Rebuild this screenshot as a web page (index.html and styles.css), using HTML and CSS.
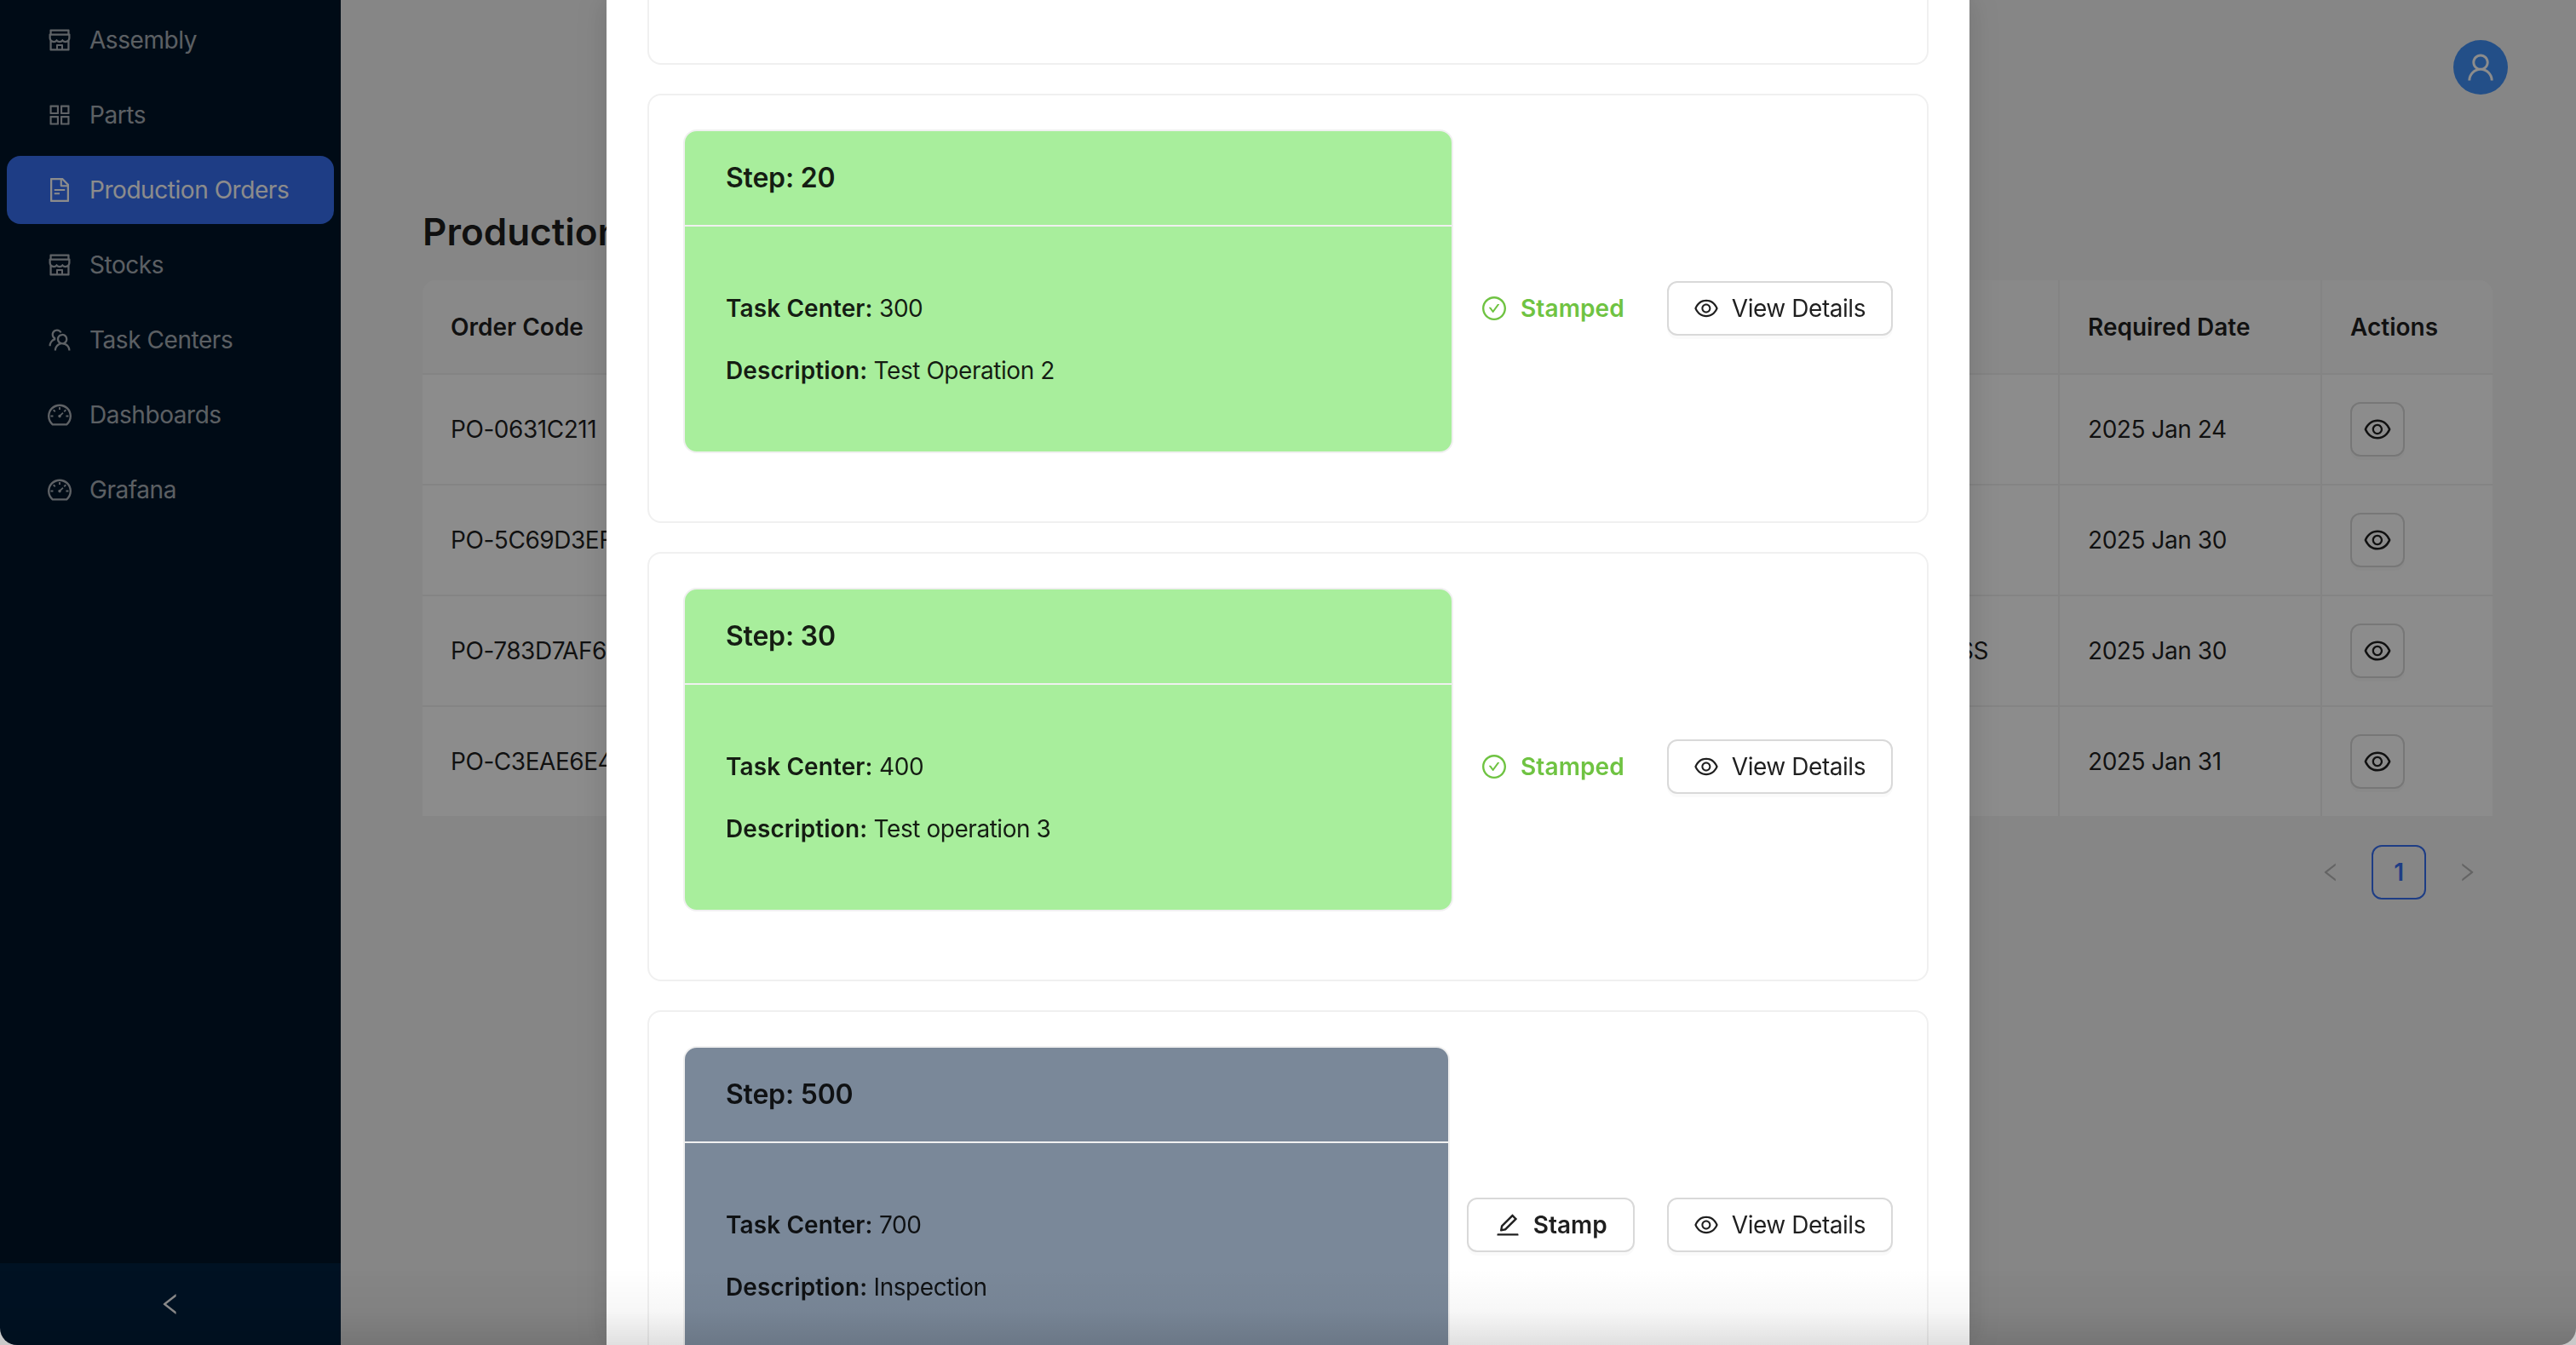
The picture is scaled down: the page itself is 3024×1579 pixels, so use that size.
FILE: index.html
```html
<!DOCTYPE html>
<html lang="en">

<head>
    <meta charset="UTF-8">
    <title>Production Orders</title>
    <link rel="stylesheet" href="styles.css">
</head>

<body>
    <!-- Icon sprite -->
    <svg class="sprite" xmlns="http://www.w3.org/2000/svg">
        <symbol id="i-shop" viewBox="0 0 1024 1024"><path d="M882 272.1V144c0-17.7-14.3-32-32-32H174c-17.7 0-32 14.3-32 32v128.1c-16.7 1-30 14.9-30 31.9v131.7a177 177 0 0014.4 70.4c4.3 10.2 9.6 19.8 15.6 28.9v345c0 17.6 14.3 32 32 32h676c17.7 0 32-14.3 32-32V535a175 175 0 0015.6-28.9c9.5-22.3 14.4-46 14.4-70.4V304c0-17-13.3-30.9-30-31.9zM214 184h596v88H214v-88zm362 656.1H448V736h128v104.1zm234 0H640V704c0-17.7-14.3-32-32-32H416c-17.7 0-32 14.3-32 32v136.1H214V597.9c2.9 1.4 5.9 2.8 9 4 22.3 9.4 46 14.1 70.4 14.1s48-4.7 70.4-14.1c13.8-5.8 26.8-13.2 38.7-22.1.2-.1.4-.1.6 0a180.4 180.4 0 0038.7 22.1c22.3 9.4 46 14.1 70.4 14.1 24.4 0 48-4.7 70.4-14.1 13.8-5.8 26.8-13.2 38.7-22.1.2-.1.4-.1.6 0a180.4 180.4 0 0038.7 22.1c22.3 9.4 46 14.1 70.4 14.1 24.4 0 48-4.7 70.4-14.1 3-1.3 6-2.6 9-4v242.2zm30-404.4c0 59.8-49 108.3-109.3 108.3-40.8 0-76.4-22.1-95.2-54.9-2.9-5-8.1-8.1-13.9-8.1h-.6c-5.7 0-11 3.1-13.9 8.1A109.24 109.24 0 01512 544c-40.7 0-76.2-22-95-54.7-3-5.1-8.4-8.3-14.3-8.3s-11.4 3.2-14.3 8.3a109.63 109.63 0 01-95.1 54.7C233 544 184 495.5 184 435.7v-91.2c0-.3.2-.5.5-.5h655c.3 0 .5.2.5.5v91.2z"/></symbol>
        <symbol id="i-apps" viewBox="0 0 1024 1024"><path d="M464 144H160c-8.8 0-16 7.2-16 16v304c0 8.8 7.2 16 16 16h304c8.8 0 16-7.2 16-16V160c0-8.8-7.2-16-16-16zm-52 268H212V212h200v200zm452-268H560c-8.8 0-16 7.2-16 16v304c0 8.8 7.2 16 16 16h304c8.8 0 16-7.2 16-16V160c0-8.8-7.2-16-16-16zm-52 268H612V212h200v200zM464 544H160c-8.8 0-16 7.2-16 16v304c0 8.8 7.2 16 16 16h304c8.8 0 16-7.2 16-16V560c0-8.8-7.2-16-16-16zm-52 268H212V612h200v200zm452-268H560c-8.8 0-16 7.2-16 16v304c0 8.8 7.2 16 16 16h304c8.8 0 16-7.2 16-16V560c0-8.8-7.2-16-16-16zm-52 268H612V612h200v200z"/></symbol>
        <symbol id="i-file" viewBox="0 0 1024 1024"><path d="M854.6 288.6L639.4 73.4c-6-6-14.1-9.4-22.6-9.4H192c-17.7 0-32 14.3-32 32v832c0 17.7 14.3 32 32 32h640c17.7 0 32-14.3 32-32V311.3c0-8.5-3.4-16.7-9.4-22.7zM790.2 326H602V137.8L790.2 326zm1.8 562H232V136h302v216a42 42 0 0042 42h216v494zM504 618H320c-4.4 0-8 3.6-8 8v48c0 4.4 3.6 8 8 8h184c4.4 0 8-3.6 8-8v-48c0-4.4-3.6-8-8-8zM312 490v48c0 4.4 3.6 8 8 8h384c4.4 0 8-3.6 8-8v-48c0-4.4-3.6-8-8-8H320c-4.4 0-8 3.6-8 8z"/></symbol>
        <symbol id="i-team" viewBox="0 0 1024 1024"><path d="M824.2 699.9a301.55 301.55 0 00-86.4-60.4C783.1 602.8 812 546.8 812 484c0-110.8-92.4-201.7-203.2-200-109.1 1.7-197 90.6-197 200 0 62.8 29 118.8 74.2 155.5a300.95 300.95 0 00-86.4 60.4C345 754.6 314 826.8 312 903.8a8 8 0 008 8.2h56c4.3 0 7.9-3.4 8-7.7 1.9-58 25.4-112.3 66.7-153.5A226.62 226.62 0 01612 684c60.9 0 118.2 23.7 161.3 66.8C814.5 792 838 846.3 840 904.3c.1 4.3 3.7 7.7 8 7.7h56a8 8 0 008-8.2c-2-77-33-149.2-87.8-203.9zM612 612c-34.2 0-66.4-13.3-90.5-37.5a126.86 126.86 0 01-37.5-91.8c.3-32.8 13.4-64.5 36.3-88 24-24.6 56.1-38.3 90.4-38.7 33.9-.3 66.8 12.9 91 36.6 24.8 24.3 38.4 56.8 38.4 91.4 0 34.2-13.3 66.3-37.5 90.5A127.3 127.3 0 01612 612zM361.5 510.4c-.9-8.7-1.4-17.5-1.4-26.4 0-15.9 1.5-31.4 4.3-46.5.7-3.6-1.2-7.3-4.5-8.8-13.6-6.1-26.1-14.5-36.9-25.1a127.54 127.54 0 01-38.7-95.4c.9-32.1 13.8-62.6 36.3-85.6 24.7-25.3 57.9-39.1 93.2-38.7 31.9.3 62.7 12.6 86 34.4 7.9 7.4 14.7 15.6 20.4 24.4 2 3.1 5.9 4.4 9.3 3.2 17.6-6.1 36.2-10.4 55.3-12.4 5.6-.6 8.8-6.6 6.3-11.6-32.5-64.3-98.9-108.7-175.7-109.9-110.9-1.7-203.3 89.2-203.3 199.9 0 62.8 28.9 118.8 74.2 155.5-31.8 14.7-61.1 35-86.5 60.4-54.8 54.7-85.8 126.9-87.8 204a8 8 0 008 8.2h56.1c4.3 0 7.9-3.4 8-7.7 1.9-58 25.4-112.3 66.7-153.5 29.4-29.4 65.4-49.8 104.7-59.7 3.9-1 6.5-4.7 6-8.7z"/></symbol>
        <symbol id="i-dash" viewBox="0 0 1024 1024"><path d="M924.8 385.6a446.7 446.7 0 00-96-142.4 446.7 446.7 0 00-142.4-96C631.1 123.8 572.5 112 512 112s-119.1 11.8-174.4 35.2a446.7 446.7 0 00-142.4 96 446.7 446.7 0 00-96 142.4C75.8 440.9 64 499.5 64 560c0 132.7 58.3 257.7 159.9 343.1l1.7 1.4c5.8 4.8 13.1 7.5 20.6 7.5h531.7c7.5 0 14.8-2.7 20.6-7.5l1.7-1.4C901.7 817.7 960 692.7 960 560c0-60.5-11.9-119.1-35.2-174.4zM761.4 836H262.6A371.12 371.12 0 01140 560c0-99.4 38.7-192.8 109-263 70.3-70.3 163.7-109 263-109 99.4 0 192.8 38.7 263 109 70.3 70.3 109 163.7 109 263 0 105.6-44.5 205.5-122.6 276zM623.5 421.5a8.03 8.03 0 00-11.3 0L527.7 506c-18.7-5-39.4-.2-54.1 14.5a55.95 55.95 0 000 79.2 55.95 55.95 0 0079.2 0 55.87 55.87 0 0014.5-54.1l84.5-84.5c3.1-3.1 3.1-8.2 0-11.3l-28.3-28.3zM490 320h44c4.4 0 8-3.6 8-8v-80c0-4.4-3.6-8-8-8h-44c-4.4 0-8 3.6-8 8v80c0 4.4 3.6 8 8 8zm260 218v44c0 4.4 3.6 8 8 8h80c4.4 0 8-3.6 8-8v-44c0-4.4-3.6-8-8-8h-80c-4.4 0-8 3.6-8 8zm12.7-197.2l-31.1-31.1a8.03 8.03 0 00-11.3 0l-56.6 56.6a8.03 8.03 0 000 11.3l31.1 31.1c3.1 3.1 8.2 3.1 11.3 0l56.6-56.6c3.1-3.1 3.1-8.2 0-11.3zm-458.6-31.1a8.03 8.03 0 00-11.3 0l-31.1 31.1a8.03 8.03 0 000 11.3l56.6 56.6c3.1 3.1 8.2 3.1 11.3 0l31.1-31.1c3.1-3.1 3.1-8.2 0-11.3l-56.6-56.6zM262 530h-80c-4.4 0-8 3.6-8 8v44c0 4.4 3.6 8 8 8h80c4.4 0 8-3.6 8-8v-44c0-4.4-3.6-8-8-8z"/></symbol>
        <symbol id="i-left" viewBox="0 0 1024 1024"><path d="M724 218.3V141c0-6.7-7.7-10.4-12.9-6.3L260.3 486.8a31.86 31.86 0 000 50.3l450.8 352.1c5.3 4.1 12.9.4 12.9-6.3v-77.3c0-4.9-2.3-9.6-6.1-12.6l-360-281 360-281.1c3.8-3 6.1-7.7 6.1-12.6z"/></symbol>
        <symbol id="i-right" viewBox="0 0 1024 1024"><path d="M765.7 486.8L314.9 134.7A7.97 7.97 0 00302 141v77.3c0 4.9 2.3 9.6 6.1 12.6l360 281.1-360 281.1c-3.9 3-6.1 7.7-6.1 12.6V883c0 6.7 7.7 10.4 12.9 6.3l450.8-352.1a31.96 31.96 0 000-50.4z"/></symbol>
        <symbol id="i-user" viewBox="0 0 1024 1024"><path d="M858.5 763.6a374 374 0 00-80.6-119.5 375.63 375.63 0 00-119.5-80.6c-.4-.2-.8-.3-1.2-.5C719.5 518 760 444.7 760 362c0-137-111-248-248-248S264 225 264 362c0 82.7 40.5 156 102.8 201.1-.4.2-.8.3-1.2.5-44.8 18.9-85 46-119.5 80.6a375.63 375.63 0 00-80.6 119.5A371.7 371.7 0 00136 901.8a8 8 0 008 8.2h60c4.4 0 7.9-3.5 8-7.8 2-77.2 33-149.5 87.8-204.3 56.7-56.7 132-87.9 212.2-87.9s155.5 31.2 212.2 87.9C779 752.7 810 825 812 902.2c.1 4.4 3.6 7.8 8 7.8h60a8 8 0 008-8.2c-1-47.8-10.9-94.3-29.5-138.2zM512 534c-45.9 0-89.1-17.9-121.6-50.4S340 407.9 340 362c0-45.9 17.9-89.1 50.4-121.6S466.1 190 512 190s89.1 17.9 121.6 50.4S684 316.1 684 362c0 45.9-17.9 89.1-50.4 121.6S557.9 534 512 534z"/></symbol>
        <symbol id="i-eye" viewBox="0 0 1024 1024"><path d="M942.2 486.2C847.4 286.5 704.1 186 512 186c-192.2 0-335.4 100.5-430.2 300.3a60.3 60.3 0 000 51.5C176.6 737.5 319.9 838 512 838c192.2 0 335.4-100.5 430.2-300.3 7.7-16.2 7.7-35 0-51.5zM512 766c-161.3 0-279.4-81.8-362.7-254C232.6 339.8 350.7 258 512 258c161.3 0 279.4 81.8 362.7 254C791.5 684.2 673.4 766 512 766zm-4-430c-97.2 0-176 78.8-176 176s78.8 176 176 176 176-78.8 176-176-78.8-176-176-176zm0 288c-61.9 0-112-50.1-112-112s50.1-112 112-112 112 50.1 112 112-50.1 112-112 112z"/></symbol>
        <symbol id="i-check" viewBox="0 0 1024 1024"><path d="M699 353h-46.9c-10.2 0-19.9 4.9-25.9 13.3L469 584.3l-71.2-98.8c-6-8.3-15.6-13.3-25.9-13.3H325c-6.5 0-10.3 7.4-6.5 12.7l124.6 172.8a31.8 31.8 0 0051.7 0l210.6-292c3.9-5.3.1-12.7-6.4-12.7z"/><path d="M512 64C264.6 64 64 264.6 64 512s200.6 448 448 448 448-200.6 448-448S759.4 64 512 64zm0 820c-205.4 0-372-166.6-372-372s166.6-372 372-372 372 166.6 372 372-166.6 372-372 372z"/></symbol>
        <symbol id="i-edit" viewBox="0 0 1024 1024"><path d="M257.7 752c2 0 4-.2 6-.5L431.9 722c2-.4 3.9-1.3 5.3-2.8l423.9-423.9a9.96 9.96 0 000-14.1L694.9 114.9c-1.9-1.9-4.4-2.9-7.1-2.9s-5.2 1-7.1 2.9L256.8 538.8c-1.5 1.5-2.4 3.3-2.8 5.3l-29.5 168.2a33.5 33.5 0 009.4 29.8c6.6 6.4 14.9 9.9 23.8 9.9zm67.4-174.4L687.8 215l73.3 73.3-362.7 362.6-88.9 15.7 15.6-89zM880 836H144c-17.7 0-32 14.3-32 32v36c0 4.4 3.6 8 8 8h784c4.4 0 8-3.6 8-8v-36c0-17.7-14.3-32-32-32z"/></symbol>
    </svg>

    <div class="layout">
        <!-- Sidebar -->
        <aside class="sider">
            <nav class="menu">
                <a class="menu-item"><svg class="icon"><use href="#i-shop"/></svg><span>Assembly</span></a>
                <a class="menu-item"><svg class="icon"><use href="#i-apps"/></svg><span>Parts</span></a>
                <a class="menu-item active"><svg class="icon"><use href="#i-file"/></svg><span>Production Orders</span></a>
                <a class="menu-item"><svg class="icon"><use href="#i-shop"/></svg><span>Stocks</span></a>
                <a class="menu-item"><svg class="icon"><use href="#i-team"/></svg><span>Task Centers</span></a>
                <a class="menu-item"><svg class="icon"><use href="#i-dash"/></svg><span>Dashboards</span></a>
                <a class="menu-item"><svg class="icon"><use href="#i-dash"/></svg><span>Grafana</span></a>
            </nav>
            <div class="sider-trigger"><svg class="icon"><use href="#i-left"/></svg></div>
        </aside>

        <!-- Main content behind the modal -->
        <main class="main">
            <header class="topbar">
                <div class="avatar"><svg class="icon"><use href="#i-user"/></svg></div>
            </header>
            <section class="content">
                <h1 class="page-title">Production Orders</h1>
                <table class="orders">
                    <colgroup>
                        <col class="col-code">
                        <col class="col-status">
                        <col class="col-date">
                        <col class="col-actions">
                    </colgroup>
                    <thead>
                        <tr>
                            <th>Order Code</th>
                            <th>Status</th>
                            <th>Required Date</th>
                            <th>Actions</th>
                        </tr>
                    </thead>
                    <tbody>
                        <tr>
                            <td>PO-0631C211</td>
                            <td class="status"></td>
                            <td>2025 Jan 24</td>
                            <td><button class="eye-btn"><svg class="icon"><use href="#i-eye"/></svg></button></td>
                        </tr>
                        <tr>
                            <td>PO-5C69D3EF</td>
                            <td class="status"></td>
                            <td>2025 Jan 30</td>
                            <td><button class="eye-btn"><svg class="icon"><use href="#i-eye"/></svg></button></td>
                        </tr>
                        <tr>
                            <td>PO-783D7AF6</td>
                            <td class="status">IN_PROGRESS</td>
                            <td>2025 Jan 30</td>
                            <td><button class="eye-btn"><svg class="icon"><use href="#i-eye"/></svg></button></td>
                        </tr>
                        <tr>
                            <td>PO-C3EAE6E4</td>
                            <td class="status"></td>
                            <td>2025 Jan 31</td>
                            <td><button class="eye-btn"><svg class="icon"><use href="#i-eye"/></svg></button></td>
                        </tr>
                    </tbody>
                </table>
                <div class="pagination">
                    <span class="page-arrow"><svg class="icon"><use href="#i-left"/></svg></span>
                    <span class="page-num">1</span>
                    <span class="page-arrow"><svg class="icon"><use href="#i-right"/></svg></span>
                </div>
            </section>
        </main>
    </div>

    <!-- Modal with the order steps, scrolled down -->
    <div class="mask">
        <div class="modal">
            <div class="step-card step-card-cut"></div>

            <div class="step-card">
                <div class="step-box done">
                    <div class="step-head">Step: 20</div>
                    <div class="step-body">
                        <p><strong>Task Center:</strong> 300</p>
                        <p><strong>Description:</strong> Test Operation 2</p>
                    </div>
                </div>
                <div class="stamped"><svg class="icon"><use href="#i-check"/></svg>Stamped</div>
                <button class="btn"><svg class="icon"><use href="#i-eye"/></svg>View Details</button>
            </div>

            <div class="step-card">
                <div class="step-box done">
                    <div class="step-head">Step: 30</div>
                    <div class="step-body">
                        <p><strong>Task Center:</strong> 400</p>
                        <p><strong>Description:</strong> Test operation 3</p>
                    </div>
                </div>
                <div class="stamped"><svg class="icon"><use href="#i-check"/></svg>Stamped</div>
                <button class="btn"><svg class="icon"><use href="#i-eye"/></svg>View Details</button>
            </div>

            <div class="step-card">
                <div class="step-box pending">
                    <div class="step-head">Step: 500</div>
                    <div class="step-body">
                        <p><strong>Task Center:</strong> 700</p>
                        <p><strong>Description:</strong> Inspection</p>
                    </div>
                </div>
                <button class="btn btn-stamp"><svg class="icon"><use href="#i-edit"/></svg>Stamp</button>
                <button class="btn"><svg class="icon"><use href="#i-eye"/></svg>View Details</button>
            </div>
        </div>
    </div>

    <!-- Window corners and the fade along the bottom of the screen -->
    <div class="screen-edge"></div>
</body>

</html>
```

FILE: styles.css
```css
/* Reset */

* {
    margin: 0;
    padding: 0;
    box-sizing: border-box;
}

html,
body {
    height: 100%;
    overflow: hidden;
}

body {
    font-family: Inter, "Noto Sans", sans-serif;
    font-size: 28px;
    line-height: 44px;
    letter-spacing: -0.45px;
    color: rgba(0, 0, 0, 0.88);
    background-color: #f5f5f5;
}

.sprite {
    display: none;
}

.icon {
    width: 32px;
    height: 32px;
    fill: currentColor;
    flex-shrink: 0;
}

/* Page layout */

.layout {
    display: flex;
    height: 100vh;
}

/* Sidebar */

.sider {
    width: 400px;
    flex-shrink: 0;
    display: flex;
    flex-direction: column;
    background-color: #001529;
}

.menu {
    flex: 1;
    padding: 7px 8px 0;
    display: flex;
    flex-direction: column;
    gap: 8px;
}

.menu-item {
    height: 80px;
    padding-left: 46px;
    display: flex;
    align-items: center;
    gap: 19px;
    border-radius: 16px;
    color: rgba(255, 255, 255, 0.68);
}

.menu-item.active {
    background-color: #3870f2;
    color: #fff;
}

.sider-trigger {
    height: 96px;
    display: flex;
    align-items: center;
    justify-content: center;
    background-color: #002140;
    color: #fff;
}

/* Main area */

.main {
    flex: 1;
    min-width: 0;
}

.topbar {
    display: flex;
    justify-content: flex-end;
    padding: 47px 80px 0;
}

.avatar {
    width: 64px;
    height: 64px;
    border-radius: 50%;
    display: flex;
    align-items: center;
    justify-content: center;
    background-color: #4191f7;
    color: #fff;
}

.avatar .icon {
    width: 40px;
    height: 40px;
}

.content {
    padding: 0 98px 0 96px;
}

.page-title {
    margin-top: 133px;
    font-size: 44px;
    line-height: 56px;
    font-weight: 600;
    letter-spacing: 0;
}

/* Orders table */

.orders {
    width: 100%;
    margin-top: 29px;
    table-layout: fixed;
    border-collapse: separate;
    border-spacing: 0;
    background-color: #fff;
    border-radius: 16px 16px 0 0;
}

.col-status {
    width: 320px;
}

.col-date {
    width: 308px;
}

.col-actions {
    width: 200px;
}

.orders th,
.orders td {
    padding: 0 32px 0 33px;
    text-align: left;
    white-space: nowrap;
    overflow: hidden;
    border-bottom: 2px solid #f0f0f0;
    border-right: 2px solid #f0f0f0;
}

.orders th:last-child,
.orders td:last-child {
    border-right: none;
}

.orders th {
    height: 111px;
    font-weight: 600;
    letter-spacing: 0;
    background-color: #fafafa;
}

.orders th:first-child {
    border-top-left-radius: 16px;
}

.orders th:last-child {
    border-top-right-radius: 16px;
}

.orders td {
    height: 130px;
}

.orders tbody tr:last-child td {
    height: 128px;
    border-bottom: none;
}

.orders td.status {
    text-align: right;
    padding-right: 82px;
}

.eye-btn {
    width: 64px;
    height: 64px;
    display: flex;
    align-items: center;
    justify-content: center;
    background-color: #fff;
    color: rgba(0, 0, 0, 0.88);
    border: 2px solid #d9d9d9;
    border-radius: 12px;
    box-shadow: 0 4px 0 rgba(0, 0, 0, 0.02);
}

.eye-btn .icon {
    width: 36px;
    height: 36px;
}

/* Pagination */

.pagination {
    margin: 34px -2px 0 0;
    display: flex;
    justify-content: flex-end;
    gap: 16px;
}

.page-arrow,
.page-num {
    width: 64px;
    height: 64px;
    display: flex;
    align-items: center;
    justify-content: center;
}

.page-arrow {
    color: rgba(0, 0, 0, 0.25);
}

.page-arrow .icon {
    width: 28px;
    height: 28px;
}

.page-num {
    border: 2px solid #3870f2;
    border-radius: 12px;
    color: #3870f2;
    font-weight: 600;
}

/* Modal */

.mask {
    position: fixed;
    inset: 0;
    background-color: rgba(0, 0, 0, 0.45);
}

.modal {
    position: absolute;
    top: 0;
    bottom: 0;
    left: 712px;
    width: 1600px;
    padding: 0 48px;
    overflow: hidden;
    display: flex;
    flex-direction: column;
    gap: 34px;
    background-color: #fff;
    box-shadow: 0 0 36px 6px rgba(0, 0, 0, 0.12);
}

.step-card {
    flex-shrink: 0;
    display: flex;
    align-items: center;
    padding: 40px;
    background-color: #fff;
    border: 2px solid #f0f0f0;
    border-radius: 16px;
}

.step-card-cut {
    height: 76px;
    padding: 0;
    border-top: none;
    border-radius: 0 0 16px 16px;
}

.step-box {
    flex: 1;
    min-width: 0;
    height: 380px;
    margin-bottom: 40px;
    border: 2px solid #f0f0f0;
    border-radius: 16px;
    display: flex;
    flex-direction: column;
}

.step-box.done {
    background-color: #a8ee9c;
}

.step-box.pending {
    background-color: #7a8899;
}

.step-head {
    height: 112px;
    flex-shrink: 0;
    padding: 0 48px;
    display: flex;
    align-items: center;
    font-size: 32px;
    font-weight: 600;
    letter-spacing: -0.2px;
    border-bottom: 2px solid #f0f0f0;
}

.step-body {
    flex: 1;
    padding: 0 48px;
    display: flex;
    flex-direction: column;
    justify-content: center;
    gap: 29px;
}

.step-body strong {
    font-weight: 600;
    letter-spacing: 0.1px;
}

.stamped {
    margin: 0 50px 0 32px;
    display: flex;
    align-items: center;
    gap: 15px;
    color: #6fc342;
    font-weight: 600;
    letter-spacing: 0.1px;
}

.btn {
    height: 64px;
    padding: 0 30px 0 28px;
    display: flex;
    align-items: center;
    gap: 14px;
    font-family: inherit;
    font-size: 28px;
    letter-spacing: -0.45px;
    color: rgba(0, 0, 0, 0.88);
    background-color: #fff;
    border: 2px solid #d9d9d9;
    border-radius: 12px;
    box-shadow: 0 4px 0 rgba(0, 0, 0, 0.02);
}

.btn-stamp {
    margin: 0 38px 0 20px;
    padding: 0 30px;
    font-weight: 600;
    letter-spacing: 0;
}

/* Screen edge: rounded corners at the bottom, soft fade above them */

.screen-edge {
    position: fixed;
    inset: -40px 0 0 0;
    border-radius: 20px;
    box-shadow: 0 0 0 30px #c9c9c9;
    background: linear-gradient(to top, rgba(0, 0, 0, 0.12), rgba(0, 0, 0, 0.03) 40px, rgba(0, 0, 0, 0) 90px);
    pointer-events: none;
}
```
